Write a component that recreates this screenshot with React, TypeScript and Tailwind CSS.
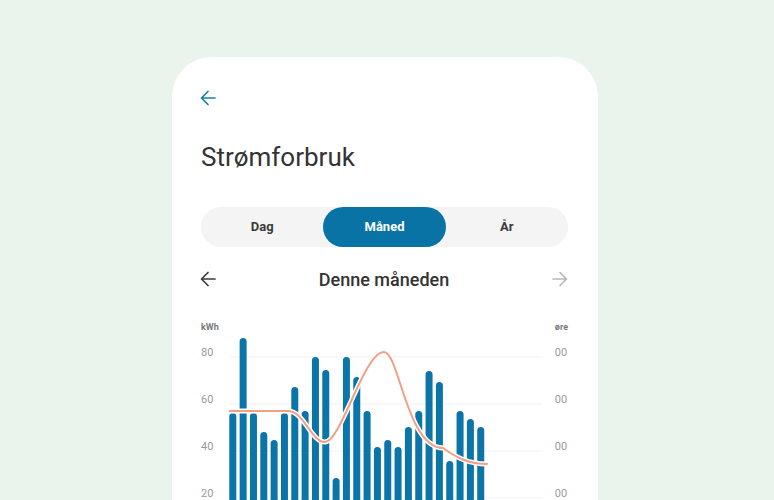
import { ReactNode } from 'react'

// bar tops measured in chart-local px (chart top = 0)
const bars = [93, 18, 93, 112, 120, 93, 67, 91, 37, 50, 158, 37, 57, 91, 127, 120, 127, 107, 91, 51, 62, 141, 91, 99, 107]

const gridY = [37, 84, 131, 178]
const leftLabels = ['80', '60', '40', '20']

function Arrow({ dir, className }: { dir: 'left' | 'right'; className: string }) {
    return (
        <svg
            width="16"
            height="16"
            viewBox="0 0 16 16"
            fill="none"
            stroke="currentColor"
            strokeWidth="1.7"
            strokeLinecap="round"
            strokeLinejoin="round"
            className={className}
        >
            {dir === 'left' ? <path d="M15 8H1.5M8 1.5 1.5 8 8 14.5" /> : <path d="M1 8h13.5M8 1.5 14.5 8 8 14.5" />}
        </svg>
    )
}

function Segment({ children, active }: { children: ReactNode; active?: boolean }) {
    return (
        <div
            className={
                active
                    ? 'flex-1 flex items-center justify-center rounded-full bg-[#0a73a6] text-white text-[13px] font-bold'
                    : 'flex-1 flex items-center justify-center text-[#3a3a3a] text-[13px] font-bold'
            }
        >
            {children}
        </div>
    )
}

function Chart() {
    return (
        <div className="flex mt-[29px]">
            <div className="w-[28px] flex flex-col text-[#9a9a9a]">
                <div className="h-[14px] leading-[14px] text-[9px] font-bold text-[#7a7a7a]">kWh</div>
                <div className="mt-[11px] flex flex-col gap-[31px]">
                    {leftLabels.map((l) => (
                        <div key={l} className="h-[16px] leading-[16px] text-[11px]">
                            {l}
                        </div>
                    ))}
                </div>
            </div>
            <svg width="326" height="190" viewBox="0 0 326 190" className="block shrink-0">
                {gridY.map((y) => (
                    <line key={y} x1="-6" x2="314" y1={y} y2={y} stroke="#f1f1f1" strokeWidth="1" />
                ))}
                {bars.map((top, i) => (
                    <rect key={i} x={0.3 + i * 10.33} y={top} width="7" height={200 - top} rx="3.5" fill="#0b74a8" />
                ))}
                <path
                    d="M0 91 L59 91 C75 91 82 122 96 122 C112 122 135 32 155 32 C170 32 178 128 214 128 C228 138 240 144 258 144"
                    fill="none"
                    stroke="#ffffff"
                    strokeWidth="5"
                    strokeLinecap="round"
                />
                <path
                    d="M0 91 L59 91 C75 91 82 122 96 122 C112 122 135 32 155 32 C170 32 178 128 214 128 C228 138 240 144 258 144"
                    fill="none"
                    stroke="#f2a085"
                    strokeWidth="2"
                    strokeLinecap="round"
                />
            </svg>
            <div className="flex flex-col text-[#9a9a9a]">
                <div className="h-[14px] leading-[14px] text-[9px] font-bold text-[#7a7a7a]">øre</div>
                <div className="mt-[11px] flex flex-col gap-[31px]">
                    {leftLabels.map((l) => (
                        <div key={l} className="h-[16px] leading-[16px] text-[11px]">
                            00
                        </div>
                    ))}
                </div>
            </div>
        </div>
    )
}

export default function App() {
    return (
        <div className="h-[500px] overflow-hidden bg-[#e9f4ec] pt-[57px] pl-[172px] font-['Roboto',sans-serif]">
            <div className="w-[426px] h-[460px] rounded-t-[40px] bg-white pl-[29px] pr-[30px] pt-[33px]">
                <Arrow dir="left" className="text-[#1b7da8] -ml-px" />
                <h1 className="mt-[35px] h-[32px] leading-[32px] text-[26px] text-[#333333]">Strømforbruk</h1>
                <div className="mt-[34px] h-[40px] flex rounded-full bg-[#f4f4f4]">
                    <Segment>Dag</Segment>
                    <Segment active>Måned</Segment>
                    <Segment>År</Segment>
                </div>
                <div className="mt-[20px] h-[24px] flex items-center justify-between">
                    <Arrow dir="left" className="text-[#3c3c3c] -ml-px" />
                    <div className="text-[18px] font-medium text-[#333333]">Denne måneden</div>
                    <Arrow dir="right" className="text-[#b8b8b8]" />
                </div>
                <Chart />
            </div>
        </div>
    )
}
